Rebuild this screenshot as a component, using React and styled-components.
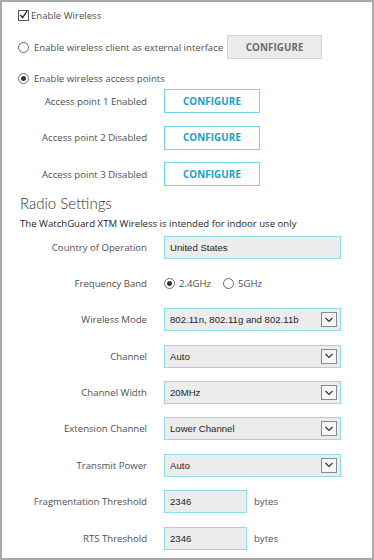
import React from 'react';
import styled, { createGlobalStyle } from 'styled-components';

const GlobalStyle = createGlobalStyle`
  html, body {
    margin: 0;
    padding: 0;
    background: #ffffff;
  }
`;

const Frame = styled.main`
  box-sizing: border-box;
  width: 374px;
  height: 560px;
  border: 2px solid #a9a9a9;
  padding: 1px 0 0 16px;
  font-family: 'Open Sans', 'Noto Sans', sans-serif;
  font-size: 9.6px;
  color: #505050;
  overflow: hidden;
`;

const OptionRow = styled.label`
  display: flex;
  align-items: center;
  height: 24px;
  margin-top: ${(props) => props.$top || 0}px;
  white-space: nowrap;
`;

const CheckBox = styled.span`
  box-sizing: border-box;
  width: 11px;
  height: 11px;
  border: 1px solid #555;
  margin-right: 2px;
  display: flex;
  align-items: center;
  justify-content: center;
`;

const Radio = styled.span`
  box-sizing: border-box;
  width: 11px;
  height: 11px;
  border: 1px solid #6a6a6a;
  border-radius: 50%;
  margin-right: ${(props) => props.$gap || 5}px;
  display: flex;
  align-items: center;
  justify-content: center;
  flex-shrink: 0;

  &::after {
    content: '';
    display: ${(props) => (props.$checked ? 'block' : 'none')};
    width: 5px;
    height: 5px;
    border-radius: 50%;
    background: #333;
  }
`;

const ConfigureButton = styled.button`
  box-sizing: border-box;
  width: ${(props) => (props.$muted ? '95px' : '96px')};
  height: 24px;
  padding: 0;
  margin-left: ${(props) => (props.$muted ? '4px' : '0')};
  font-family: 'Open Sans', 'Noto Sans', sans-serif;
  font-size: 9.8px;
  font-weight: 700;
  letter-spacing: 0.1px;
  background: ${(props) => (props.$muted ? '#ebebeb' : '#ffffff')};
  border: 1px solid ${(props) => (props.$muted ? '#d2d2d2' : '#6ed4e8')};
  color: ${(props) => (props.$muted ? '#6c6c6c' : '#18a0c9')};
  cursor: pointer;
`;

const FormGrid = styled.div`
  display: grid;
  grid-template-columns: 127px auto;
  grid-auto-rows: 24px;
  column-gap: 17px;
  row-gap: ${(props) => props.$gap}px;
  margin-top: ${(props) => props.$top || 0}px;
  padding-left: 2px;
  align-items: center;
  justify-items: start;
`;

const FieldLabel = styled.span`
  justify-self: end;
  white-space: nowrap;
`;

const Heading = styled.h2`
  margin: 9px 0 0 2px;
  font-family: Lato, 'Open Sans', sans-serif;
  font-weight: 300;
  font-size: 15px;
  line-height: 17px;
  color: #333;
`;

const Note = styled.p`
  margin: 5px 0 0 2px;
  line-height: 14px;
  color: #262626;
  white-space: nowrap;
`;

const TextBox = styled.div`
  box-sizing: border-box;
  width: ${(props) => props.$width}px;
  height: 23px;
  background: #ececec;
  border: 1px solid #8edbe9;
  padding: 0 3px 0 5px;
  display: flex;
  align-items: center;
  justify-content: space-between;
  font-family: 'Liberation Sans', Arial, sans-serif;
  font-size: 9.6px;
  color: #1e1e1e;
`;

const ArrowBox = styled.span`
  box-sizing: border-box;
  width: 16px;
  height: 15px;
  border: 1px solid #8a8a8a;
  background: #f6f6f6;
  display: flex;
  align-items: center;
  justify-content: center;
`;

const Inline = styled.div`
  display: flex;
  align-items: center;
  height: 24px;
`;

const Unit = styled.span`
  margin-left: 7px;
`;

const BandOption = styled.span`
  display: flex;
  align-items: center;
  margin-right: 12px;
`;

function Chevron() {
  return (
    <svg width="10" height="6" viewBox="0 0 10 6">
      <path d="M1.5 1 L5 4.5 L8.5 1" fill="none" stroke="#333" strokeWidth="1.2" />
    </svg>
  );
}

function Check() {
  return (
    <svg width="10" height="10" viewBox="0 0 10 10">
      <path d="M1.5 5 L4 8 L9 0.5" fill="none" stroke="#222" strokeWidth="1.4" />
    </svg>
  );
}

function Select({ value }) {
  return (
    <TextBox $width={177}>
      {value}
      <ArrowBox>
        <Chevron />
      </ArrowBox>
    </TextBox>
  );
}

const accessPoints = [
  'Access point 1 Enabled',
  'Access point 2 Disabled',
  'Access point 3 Disabled',
];

const selects = [
  ['Wireless Mode', '802.11n, 802.11g and 802.11b'],
  ['Channel', 'Auto'],
  ['Channel Width', '20MHz'],
  ['Extension Channel', 'Lower Channel'],
  ['Transmit Power', 'Auto'],
];

function App() {
  return (
    <>
      <GlobalStyle />
      <Frame>
        <OptionRow>
          <CheckBox>
            <Check />
          </CheckBox>
          Enable Wireless
        </OptionRow>
        <OptionRow $top={8}>
          <Radio />
          Enable wireless client as external interface
          <ConfigureButton $muted>CONFIGURE</ConfigureButton>
        </OptionRow>
        <OptionRow $top={7}>
          <Radio $checked />
          Enable wireless access points
        </OptionRow>

        <FormGrid $gap={12.5} $top={-1}>
          {accessPoints.map((name) => (
            <React.Fragment key={name}>
              <FieldLabel>{name}</FieldLabel>
              <ConfigureButton>CONFIGURE</ConfigureButton>
            </React.Fragment>
          ))}
        </FormGrid>

        <Heading>Radio Settings</Heading>
        <Note>The WatchGuard XTM Wireless is intended for indoor use only</Note>

        <FormGrid $gap={12.4} $top={4}>
          <FieldLabel>Country of Operation</FieldLabel>
          <TextBox $width={177}>United States</TextBox>

          <FieldLabel>Frequency Band</FieldLabel>
          <Inline>
            <BandOption>
              <Radio $checked $gap={4} />
              2.4GHz
            </BandOption>
            <BandOption>
              <Radio $gap={4} />
              5GHz
            </BandOption>
          </Inline>

          {selects.map(([label, value]) => (
            <React.Fragment key={label}>
              <FieldLabel>{label}</FieldLabel>
              <Select value={value} />
            </React.Fragment>
          ))}

          <FieldLabel>Fragmentation Threshold</FieldLabel>
          <Inline>
            <TextBox $width={83}>2346</TextBox>
            <Unit>bytes</Unit>
          </Inline>

          <FieldLabel>RTS Threshold</FieldLabel>
          <Inline>
            <TextBox $width={83}>2346</TextBox>
            <Unit>bytes</Unit>
          </Inline>
        </FormGrid>
      </Frame>
    </>
  );
}

export default App;
